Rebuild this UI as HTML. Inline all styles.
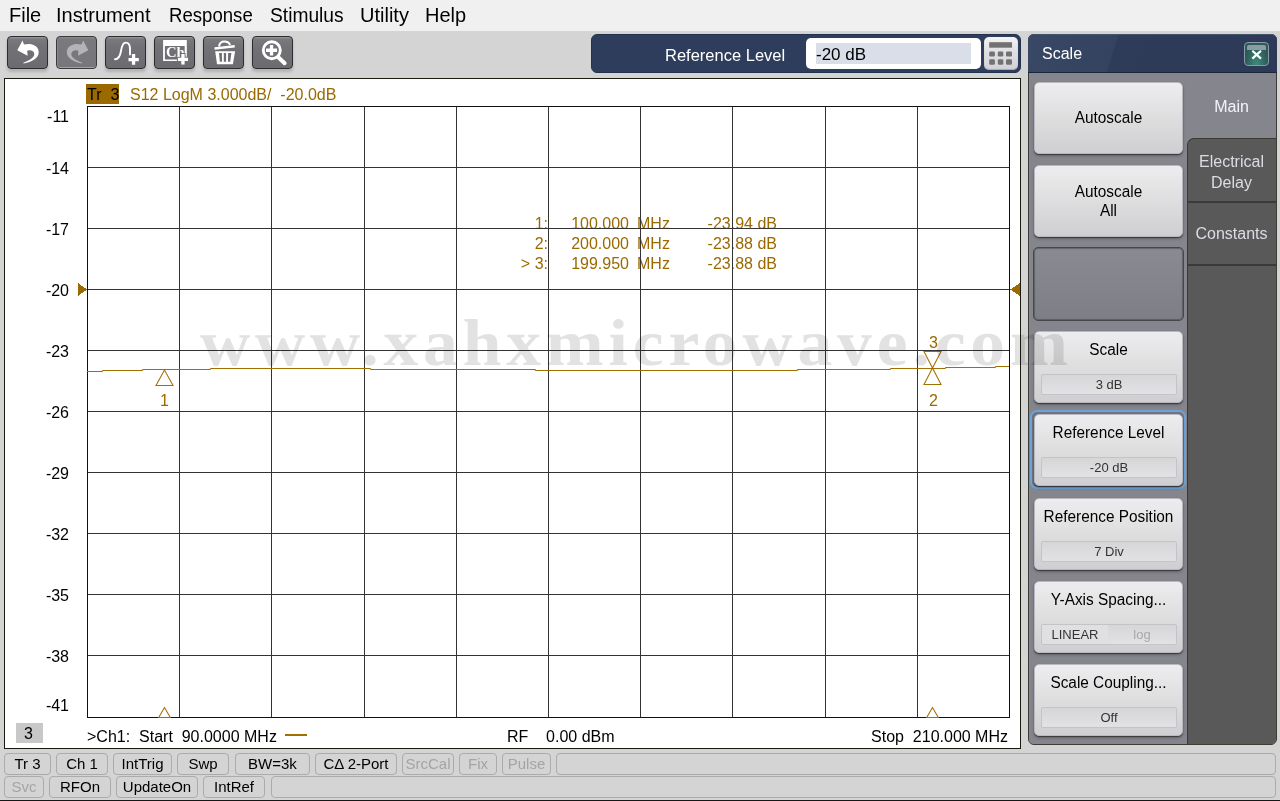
<!DOCTYPE html>
<html><head><meta charset="utf-8">
<style>
*{box-sizing:border-box;margin:0;padding:0}
html,body{width:1280px;height:801px;overflow:hidden;background:#d4d4d4;font-family:"Liberation Sans",sans-serif;position:relative}
.a{position:absolute}
#menu{left:0;top:0;width:1280px;height:31px;background:#f0f0f0}
#menu span{position:absolute;top:4px;font-size:20px;line-height:23px;color:#000;white-space:nowrap}
.tb{position:absolute;top:36px;width:41px;height:33px;border-radius:4px;border:1px solid #2c2c2e;background:linear-gradient(#9c9ca0 0,#7a797e 2px,#727176 30%,#6c6b70);box-shadow:0 3px 3px rgba(0,0,0,0.16)}
.tb.dis{border-color:#3a3a3c;background:linear-gradient(#8c8c90 0,#7a797e 2px,#77767b);box-shadow:inset 0 -1px 0 #a4a4a8,inset 1px 0 0 #88888c}
.tb svg{position:absolute;left:0;top:0}
#plot{left:4px;top:78px;width:1017px;height:671px;background:#fff;border:1px solid #1a1a10}
.t{position:absolute;white-space:nowrap;font-size:16px;line-height:18px}
.yl{position:absolute;left:20px;width:49px;text-align:right;font-size:16px;line-height:18px;color:#000}
.g{color:#9a6a00}
.sb{position:absolute;left:1034px;width:149px;height:72px;border-radius:5px;background:linear-gradient(#ededef,#dededf 50%,#cfcfd3);box-shadow:0 1px 1px rgba(0,0,0,0.45),0 2px 3px rgba(0,0,0,0.25);border:1px solid #b8b8be}
.sb.emp{background:linear-gradient(#8a8a92,#7e7e86);border:1px solid #46464c;box-shadow:inset 0 0 1px 1px rgba(70,70,76,.55);height:74px;left:1033px;width:151px}
.st{position:absolute;left:0;width:100%;text-align:center;font-size:16px;line-height:19px;color:#000;transform:scaleX(0.96)}
.vb{position:absolute;left:6px;top:42px;width:136px;height:21px;border:1px solid #c4c4c8;border-radius:2px;background:linear-gradient(#d6d6d8,#e2e2e4);font-size:13px;line-height:19px;text-align:center;color:#333;font-family:"Liberation Sans",sans-serif}
.sbar{position:absolute;height:22px;border:1px solid #ababab;border-radius:4px;background:#d4d4d4;font-size:15px;line-height:20px;text-align:center;color:#000}
.sbar.dis{color:#a4a4a4}
</style></head><body>
<div id="menu" class="a">
<span style="left:9px">File</span>
<span style="left:56px">Instrument</span>
<span style="left:169px;transform:scaleX(0.93);transform-origin:0 0">Response</span>
<span style="left:270px;transform:scaleX(0.96);transform-origin:0 0">Stimulus</span>
<span style="left:360px">Utility</span>
<span style="left:425px">Help</span>
</div>
<div class="tb" style="left:7px"></div>
<div class="tb dis" style="left:56px"></div>
<div class="tb" style="left:105px"></div>
<div class="tb" style="left:154px"></div>
<div class="tb" style="left:203px"></div>
<div class="tb" style="left:252px"></div>
<svg class="a" style="left:7px;top:36px" width="41" height="33"><path fill="#fff" d="M10.3 14.2L15.5 4.5L17 8.6C19.5 8.1 22.5 7.9 25 8.4C29.5 9.4 32 12.8 31.7 16.8C31.3 21.5 26.5 25.5 16.5 27.6L16.3 26.8C23 24.3 27.3 21.3 27.3 18C27.3 15.3 24.8 14 22 14.2L20.2 14.8L20.6 19.8Z"/></svg>
<svg class="a" style="left:56px;top:36px" width="41" height="33"><path fill="#b4b4b6" transform="translate(42.6,0) scale(-1,1)" d="M10.3 14.2L15.5 4.5L17 8.6C19.5 8.1 22.5 7.9 25 8.4C29.5 9.4 32 12.8 31.7 16.8C31.3 21.5 26.5 25.5 16.5 27.6L16.3 26.8C23 24.3 27.3 21.3 27.3 18C27.3 15.3 24.8 14 22 14.2L20.2 14.8L20.6 19.8Z"/></svg>
<svg class="a" style="left:105px;top:36px" width="41" height="33"><path fill="none" stroke="#fff" stroke-width="1.9" stroke-linecap="round" d="M10 23.3C13 23.3 15 21 16 15C17 9 18.5 6.6 20.6 6.6C23.5 6.6 25 9 25 13L25 18.5"/><path fill="#fff" d="M23.5 21.9h10.3v3.3h-10.3zM26.9 18.1h3.3v10.7h-3.3z"/></svg>
<svg class="a" style="left:154px;top:36px" width="41" height="33"><path fill="#fff" fill-rule="evenodd" d="M9.1 4.1h23.7v21H9.1zM10.9 9.9v13.6h19.8V9.9z"/><text x="12" y="21.3" font-family="Liberation Serif" font-weight="700" font-size="14" fill="#fff" transform="translate(12,0) scale(1.05,1) translate(-12,0)">Ch</text><path fill="#727176" d="M22.9 20.8h3.4v-3.7h5.3v3.7h3.4v5.3h-3.4v3.5h-5.3v-3.5h-3.4z"/><path fill="#fff" d="M23.9 21.8h10.1v3.3h-10.1zM27.3 18.1h3.3v10.5h-3.3z"/></svg>
<svg class="a" style="left:203px;top:36px" width="41" height="33"><path fill="none" stroke="#fff" stroke-width="2" d="M16 10.5C16.5 7 19 5.6 21.4 5.6C24 5.6 26.3 6.8 27 9"/><path fill="#fff" d="M11.5 11.2L31.6 9L31.8 11.6L11.6 13.8Z"/><path fill="#fff" fill-rule="evenodd" d="M12.2 15.2H32.1L29.9 28.2H14ZM16 16.9L16.9 25.8H19L18.9 16.9ZM20.8 16.9V25.8H23.1V16.9ZM25.1 16.9L25 25.8H27.2L28.4 16.9Z"/></svg>
<svg class="a" style="left:252px;top:36px" width="41" height="33"><circle cx="19.8" cy="14.2" r="8.5" fill="none" stroke="#fff" stroke-width="2.9"/><path fill="#fff" d="M14 12.6h11.1v3.3h-11.1zM17.9 8.9h3.3v10.7h-3.3z"/><path stroke="#fff" stroke-width="4" stroke-linecap="round" d="M26.3 21.3L32.6 27.2"/></svg>

<div id="plot" class="a"></div>

<!-- PLOT CONTENT -->
<div class="a" style="left:86px;top:84px;width:33px;height:20px;background:#9a6a00"></div>
<div class="t" style="left:87px;top:86px;color:#000">Tr&nbsp; 3</div>
<div class="t g" style="left:130px;top:86px">S12 LogM 3.000dB/ &nbsp;-20.0dB</div>

<div class="yl" style="top:108px">-11</div>
<div class="yl" style="top:160px">-14</div>
<div class="yl" style="top:221px">-17</div>
<div class="yl" style="top:282px">-20</div>
<div class="yl" style="top:343px">-23</div>
<div class="yl" style="top:404px">-26</div>
<div class="yl" style="top:465px">-29</div>
<div class="yl" style="top:526px">-32</div>
<div class="yl" style="top:587px">-35</div>
<div class="yl" style="top:648px">-38</div>
<div class="yl" style="top:697px">-41</div>



<!-- marker readout -->
<div class="t g" style="left:500px;top:215px;width:48px;text-align:right">1:</div>
<div class="t g" style="left:500px;top:235px;width:48px;text-align:right">2:</div>
<div class="t g" style="left:500px;top:255px;width:48px;text-align:right">&gt; 3:</div>
<div class="t g" style="left:560px;top:215px;width:69px;text-align:right">100.000</div>
<div class="t g" style="left:560px;top:235px;width:69px;text-align:right">200.000</div>
<div class="t g" style="left:560px;top:255px;width:69px;text-align:right">199.950</div>
<div class="t g" style="left:637px;top:215px">MHz</div>
<div class="t g" style="left:637px;top:235px">MHz</div>
<div class="t g" style="left:637px;top:255px">MHz</div>
<div class="t g" style="left:690px;top:215px;width:87px;text-align:right">-23.94 dB</div>
<div class="t g" style="left:690px;top:235px;width:87px;text-align:right">-23.88 dB</div>
<div class="t g" style="left:690px;top:255px;width:87px;text-align:right">-23.88 dB</div>

<svg class="a" style="left:0;top:0" width="1280" height="801" shape-rendering="crispEdges">
<g stroke="#333" stroke-width="1" fill="none">
<path d="M179.5 106V717M271.5 106V717M364.5 106V717M456.5 106V717M548.5 106V717M640.5 106V717M732.5 106V717M825.5 106V717M917.5 106V717"/>
<path d="M87 167.5H1009M87 228.5H1009M87 289.5H1009M87 350.5H1009M87 411.5H1009M87 472.5H1009M87 533.5H1009M87 594.5H1009M87 655.5H1009"/>
</g>
<rect x="87.5" y="106.5" width="922" height="611" stroke="#111" fill="none"/>
<g fill="#9a6a00"><path d="M78 283L87 289.5L78 296Z"/><path d="M1020 283L1010 289.5L1020 296Z"/></g>
</svg>
<svg class="a" style="left:0;top:0" width="1280" height="801">
<polyline fill="none" stroke="#a27000" stroke-width="1.2" points="87,371.5 102,371.5 103,370.5 142,370.5 143,369.5 210,369.5 211,368.5 370,368.5 371,369.5 535,369.5 536,370.5 797,370.5 798,369.5 890,369.5 891,368.5 945,368.5 946,367.5 995,367.5 996,366.5 1009,366.5"/>
<g fill="none" stroke="#a27000" stroke-width="1.05">
<path d="M164.5 370L156 385.5H173Z"/>
<path d="M932.5 368L924 351.5H941Z"/>
<path d="M932.5 368L924 384.5H941Z"/>
<path d="M164.5 707.5L158.7 717.5H170.3Z"/>
<path d="M932.5 707.5L926.7 717.5H938.3Z"/>
</g>
</svg>
<div class="t g" style="left:160px;top:392px">1</div>
<div class="t g" style="left:929px;top:392px">2</div>
<div class="t g" style="left:929px;top:334px">3</div>

<!-- bottom row -->
<div class="a" style="left:16px;top:723px;width:27px;height:20px;background:#c8c8c8"></div>
<div class="t" style="left:24px;top:725px">3</div>
<div class="t" style="left:87px;top:728px">&gt;Ch1: &nbsp;Start &nbsp;90.0000 MHz</div>
<div class="a" style="left:285px;top:734px;width:22px;height:2px;background:#a27000"></div>
<div class="t" style="left:507px;top:728px">RF &nbsp;&nbsp;&nbsp;0.00 dBm</div>
<div class="t" style="left:860px;top:728px;width:148px;text-align:right">Stop &nbsp;210.000 MHz</div>


<!-- reference level entry bar -->
<div class="a" style="left:591px;top:34px;width:430px;height:39px;background:#2e3d5c;border-radius:6px;border:1px solid #24314c"></div>
<div class="t" style="left:665px;top:45px;font-size:16.5px;line-height:20px;color:#fff">Reference Level</div>
<div class="a" style="left:806px;top:38px;width:175px;height:31px;background:#fff;border-radius:5px"></div>
<div class="a" style="left:816px;top:43px;width:155px;height:21px;background:#d9dee8"></div>
<div class="t" style="left:816px;top:45px;font-size:17px;line-height:20px;color:#000">-20 dB</div>
<div class="a" style="left:984px;top:37px;width:34px;height:33px;border-radius:5px;background:linear-gradient(#f4f4f6,#e2e2e6 40%,#d2d2d6);box-shadow:inset 0 -1px 1px #a8a8b0"></div>
<svg class="a" style="left:985px;top:37px" width="33" height="33"><g fill="#727272"><rect x="4.2" y="5.2" width="22.8" height="5.5"/><rect x="4.2" y="14.4" width="5.7" height="5.2" rx="1.3"/><rect x="12.8" y="14.4" width="5.5" height="5.2" rx="1.3"/><rect x="21" y="14.4" width="6" height="5.2" rx="1.3"/><rect x="4.2" y="22.3" width="5.7" height="5.5" rx="1.3"/><rect x="12.8" y="22.3" width="5.5" height="5.5" rx="1.3"/><rect x="21" y="22.3" width="6" height="5.5" rx="1.3"/></g></svg>

<!-- right panel -->
<div class="a" style="left:1028px;top:34px;width:249px;height:711px;background:#85858d;border-radius:6px;border:1px solid #3c3c34"></div>
<div class="a" style="left:1029px;top:73px;width:158px;height:671px;background:#85858d;border-bottom-left-radius:5px"></div>
<div class="a" style="left:1028px;top:34px;width:249px;height:39px;background:linear-gradient(107deg,#384865 0,#34435f 34.5%,#2e3c59 35%,#2c3a57 100%);border-radius:6px 6px 0 0;border-bottom:1px solid #1c2438;box-shadow:inset 0 1px 0 #45536c"></div>
<div class="t" style="left:1042px;top:44px;font-size:16px;line-height:20px;color:#fff">Scale</div>
<div class="a" style="left:1244px;top:42px;width:25px;height:24px;border-radius:4px;border:1px solid #8a9aa8;background:radial-gradient(ellipse at 50% 100%,#3f8a7c,#2c5a58 70%)"></div>
<div class="a" style="left:1247px;top:45px;width:19px;height:5px;background:#8a9ca6;border-radius:2px 2px 0 0"></div>
<svg class="a" style="left:1244px;top:42px" width="25" height="24"><path d="M8.3 8.8L17 16.6M17 8.8L8.3 16.6" stroke="#fff" stroke-width="2.2"/></svg>

<div class="t" style="left:1187px;top:97px;width:89px;text-align:center;font-size:16px;line-height:19px;color:#f4f4f8">Main</div>
<div class="a" style="left:1187px;top:138px;width:89px;height:606px;background:#595959;border-radius:7px 0 5px 0;border-left:1px solid #3a3a30;border-top:1px solid #3a3a30"></div>
<div class="a" style="left:1187px;top:201px;width:89px;height:2px;background:#3a3a3a"></div>
<div class="a" style="left:1187px;top:264px;width:89px;height:2px;background:#3a3a3a"></div>
<div class="t" style="left:1187px;top:151px;width:89px;text-align:center;font-size:16px;line-height:21px;color:#dcdce4">Electrical<br>Delay</div>
<div class="t" style="left:1187px;top:224px;width:89px;text-align:center;font-size:16px;line-height:20px;color:#dcdce4">Constants</div>

<div class="sb" style="top:82px"><div class="st" style="top:25px">Autoscale</div></div>
<div class="sb" style="top:165px"><div class="st" style="top:16px;line-height:19px">Autoscale<br>All</div></div>
<div class="sb emp" style="top:247px"></div>
<div class="sb" style="top:331px"><div class="st" style="top:8px">Scale</div><div class="vb">3 dB</div></div>
<div class="a" style="left:1030px;top:410px;width:156px;height:79px;border:2px solid #6ea2d8;border-radius:7px;background:#6e7480"></div>
<div class="sb" style="top:414px"><div class="st" style="top:8px">Reference Level</div><div class="vb">-20 dB</div></div>
<div class="sb" style="top:498px"><div class="st" style="top:8px">Reference Position</div><div class="vb">7 Div</div></div>
<div class="sb" style="top:581px"><div class="st" style="top:8px">Y-Axis Spacing...</div><div class="vb" style="text-align:left"><span style="display:inline-block;width:66px;text-align:center;background:#e0e0e2">LINEAR</span><span style="display:inline-block;width:68px;text-align:center;color:#a8a8a8">log</span></div></div>
<div class="sb" style="top:664px"><div class="st" style="top:8px">Scale Coupling...</div><div class="vb">Off</div></div>

<!-- status bars -->
<div class="a" style="left:0;top:749px;width:1280px;height:52px;background:#d4d4d4"></div>
<div class="sbar" style="left:4px;top:753px;width:47px">Tr 3</div>
<div class="sbar" style="left:56px;top:753px;width:52px">Ch 1</div>
<div class="sbar" style="left:113px;top:753px;width:59px">IntTrig</div>
<div class="sbar" style="left:177px;top:753px;width:52px">Swp</div>
<div class="sbar" style="left:235px;top:753px;width:75px">BW=3k</div>
<div class="sbar" style="left:315px;top:753px;width:82px">C&Delta; 2-Port</div>
<div class="sbar dis" style="left:402px;top:753px;width:52px">SrcCal</div>
<div class="sbar dis" style="left:459px;top:753px;width:38px">Fix</div>
<div class="sbar dis" style="left:502px;top:753px;width:49px">Pulse</div>
<div class="sbar" style="left:556px;top:753px;width:720px"></div>
<div class="sbar dis" style="left:4px;top:776px;width:40px">Svc</div>
<div class="sbar" style="left:49px;top:776px;width:62px">RFOn</div>
<div class="sbar" style="left:116px;top:776px;width:82px">UpdateOn</div>
<div class="sbar" style="left:203px;top:776px;width:62px">IntRef</div>
<div class="sbar" style="left:271px;top:776px;width:1005px"></div>
<div class="a" style="left:0;top:800px;width:1280px;height:1px;background:#161616"></div>
<!-- watermark -->
<div class="t" id="wm" style="left:200px;top:304px;font-family:'Liberation Serif',serif;font-weight:bold;font-size:64px;line-height:80px;letter-spacing:4.5px;color:#e2e2e2;mix-blend-mode:multiply;z-index:50;transform:scale(1.085,1.03);transform-origin:0 60px">www.xahxmicrowave.com</div>
</body></html>
